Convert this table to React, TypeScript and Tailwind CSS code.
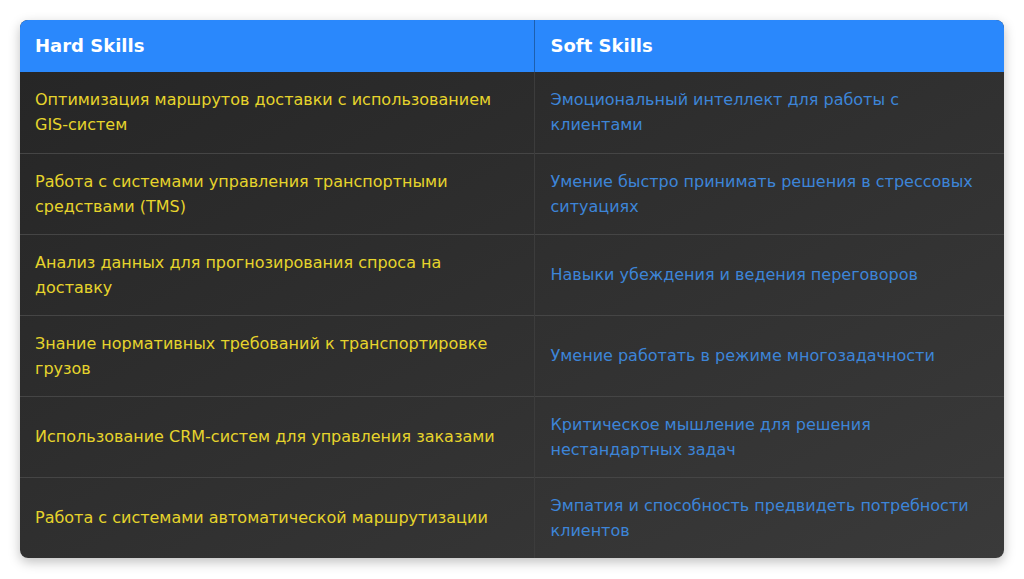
const rows: [string, string][] = [
  ["Оптимизация маршрутов доставки с использованием GIS-систем", "Эмоциональный интеллект для работы с клиентами"],
  ["Работа с системами управления транспортными средствами (TMS)", "Умение быстро принимать решения в стрессовых ситуациях"],
  ["Анализ данных для прогнозирования спроса на доставку", "Навыки убеждения и ведения переговоров"],
  ["Знание нормативных требований к транспортировке грузов", "Умение работать в режиме многозадачности"],
  ["Использование CRM-систем для управления заказами", "Критическое мышление для решения нестандартных задач"],
  ["Работа с системами автоматической маршрутизации", "Эмпатия и способность предвидеть потребности клиентов"],
];

export default function App() {
  return (
    <div className="min-h-screen bg-white p-5 font-['DejaVu_Sans',sans-serif]">
      <div className="overflow-hidden rounded-lg bg-gradient-to-br from-[#252525] to-[#3a3a3a] shadow-[0_4px_12px_rgba(0,0,0,0.25)]">
        <table className="w-full border-collapse text-left">
          <thead>
            <tr className="bg-[#2a88fc] text-white">
              <th className="w-[514px] border-r border-[#1d5fae] py-3 pr-4 pl-[15px] text-lg leading-7 font-bold">Hard Skills</th>
              <th className="px-4 py-3 text-lg leading-7 font-bold">Soft Skills</th>
            </tr>
          </thead>
          <tbody>
            {rows.map(([hard, soft], i) => (
              <tr key={i} className={i < rows.length - 1 ? "border-b border-[#454545]" : ""}>
                <td className="h-[81px] border-r border-[#3c3c3c] py-[15px] pr-4 pl-[15px] align-middle text-base leading-[25px] text-[#e6d42c]">
                  {hard}
                </td>
                <td className="h-[81px] px-4 py-[15px] align-middle text-base leading-[25px] text-[#3d85d8]">
                  {soft}
                </td>
              </tr>
            ))}
          </tbody>
        </table>
      </div>
    </div>
  );
}
